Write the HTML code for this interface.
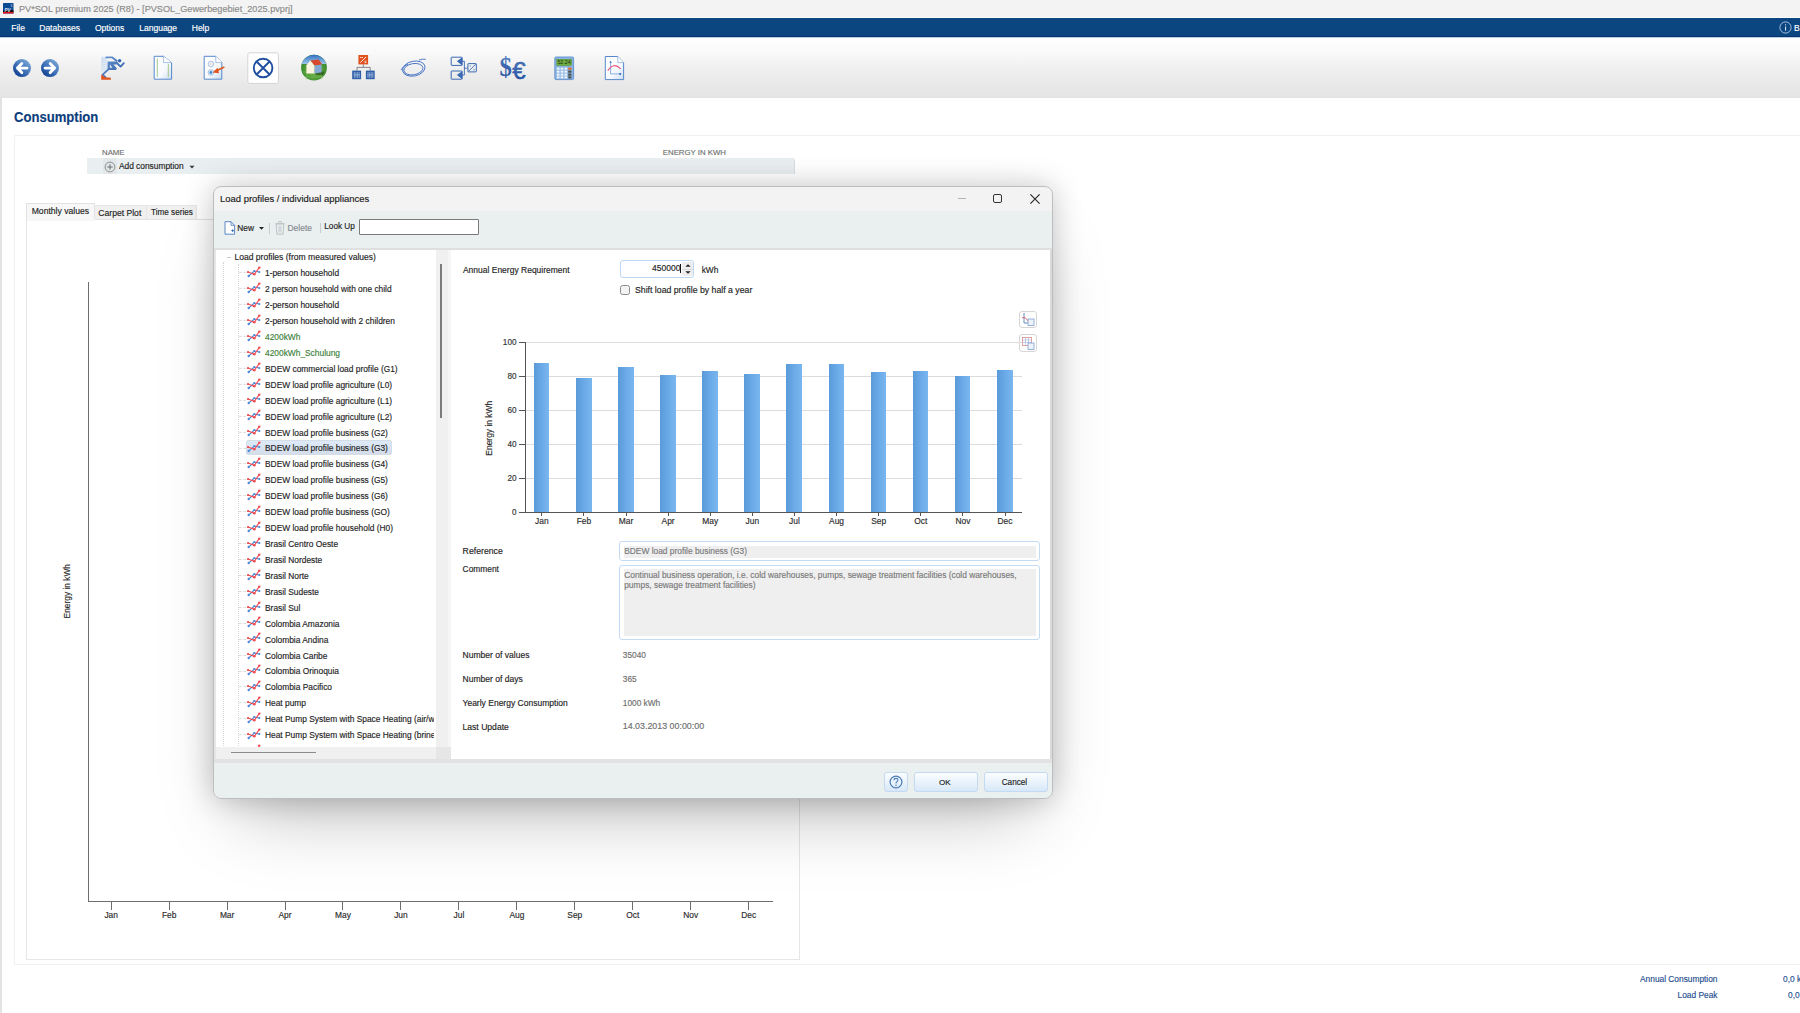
<!DOCTYPE html>
<html><head><meta charset="utf-8"><title>PV*SOL</title>
<style>
html,body{margin:0;padding:0;}
body{width:1800px;height:1013px;overflow:hidden;position:relative;background:#fff;font-family:"Liberation Sans",sans-serif;}
.t{position:absolute;white-space:pre;-webkit-text-stroke:0.15px currentColor;}
.b{position:absolute;box-sizing:border-box;}
svg{position:absolute;overflow:visible;}
</style></head><body>

<div class="b" style="left:0px;top:0px;width:1800px;height:17px;background:#f3f3f3;"></div>
<div class="b" style="left:0px;top:17px;width:1800px;height:1px;background:#fbfbfb;"></div>
<svg style="left:2.9px;top:2.9px" width="10.5" height="10.5" viewBox="0 0 10.5 10.5"><rect x="0" y="0" width="10.5" height="10.5" rx="0.6" fill="#0b4a92"/><rect x="0" y="7.3" width="10.5" height="1.8" fill="#0a0a0a"/><rect x="0" y="8.9" width="10.5" height="1.6" fill="#e5141c"/><text x="1.4" y="8.7" font-size="4.6" font-weight="700" font-style="italic" fill="#dfe8f5" font-family="Liberation Sans">PV</text><text x="7.4" y="3.8" font-size="3.4" font-weight="700" fill="#9db7dc" font-family="Liberation Sans">5</text></svg>
<div class="t " style="left:18.75px;top:4.40px;font-size:9.8px;line-height:9.8px;color:#8a8a8a;font-weight:400;transform:scaleX(0.933);transform-origin:0 0;">PV*SOL premium 2025 (R8) - [PVSOL_Gewerbegebiet_2025.pvprj]</div>
<div class="b" style="left:0px;top:18px;width:1800px;height:19px;background:#0c4681;"></div>
<div class="b" style="left:0px;top:35.6px;width:1800px;height:1.4px;background:#05346e;"></div>
<div class="b" style="left:0px;top:37px;width:1800px;height:1px;background:#b9cde3;"></div>
<div class="t " style="left:11.25px;top:23.80px;font-size:8.5px;line-height:8.5px;color:#ffffff;font-weight:400;">File</div>
<div class="t " style="left:39.25px;top:23.80px;font-size:8.5px;line-height:8.5px;color:#ffffff;font-weight:400;">Databases</div>
<div class="t " style="left:95.00px;top:23.80px;font-size:8.5px;line-height:8.5px;color:#ffffff;font-weight:400;">Options</div>
<div class="t " style="left:139.25px;top:23.80px;font-size:8.5px;line-height:8.5px;color:#ffffff;font-weight:400;">Language</div>
<div class="t " style="left:191.75px;top:23.80px;font-size:8.5px;line-height:8.5px;color:#ffffff;font-weight:400;">Help</div>
<svg style="left:1779px;top:21px" width="13" height="13" viewBox="0 0 13 13"><circle cx="6.5" cy="6.5" r="5.6" fill="none" stroke="#a9c3e3" stroke-width="1"/><rect x="6" y="5.5" width="1.1" height="4.2" fill="#cfe0f3"/><rect x="6" y="3.3" width="1.1" height="1.1" fill="#cfe0f3"/></svg>
<div class="t " style="left:1794.00px;top:23.80px;font-size:8.5px;line-height:8.5px;color:#ffffff;font-weight:400;">B</div>
<div class="b" style="left:0px;top:38px;width:1800px;height:60px;background:linear-gradient(#ffffff 0%,#f9f9f9 25%,#f0f0f0 50%,#e9e9e9 75%,#e4e4e4 100%);"></div>
<div class="b" style="left:0px;top:98px;width:2.3px;height:915px;background:#e3e3e3;"></div>
<div class="t " style="left:14.00px;top:110.25px;font-size:14px;line-height:14px;color:#0b3d7c;font-weight:700;transform:scaleX(0.935);transform-origin:0 0;">Consumption</div>
<div class="b" style="left:13.5px;top:135px;width:1800px;height:830px;border:1px solid #edf1f3;border-right:none;border-radius:2px 0 0 2px;"></div>
<div class="t " style="left:102.00px;top:148.70px;font-size:7.8px;line-height:7.8px;color:#6f6f6f;font-weight:400;">NAME</div>
<div class="t " style="left:662.80px;top:148.70px;font-size:7.8px;line-height:7.8px;color:#6f6f6f;font-weight:400;">ENERGY IN KWH</div>
<div class="b" style="left:87px;top:158px;width:708px;height:16px;background:#e9eef0;border-radius:0 4px 0 0;border-right:1px solid #d8dcde;"></div>
<div class="b" style="left:102.8px;top:158px;width:14px;height:16px;background:#e2e8ea;"></div>
<svg style="left:104px;top:161px" width="12" height="12" viewBox="0 0 12 12"><circle cx="6" cy="6" r="4.9" fill="none" stroke="#8d8d8d" stroke-width="1"/><rect x="5.5" y="3.3" width="1" height="5.4" fill="#6d6d6d"/><rect x="3.3" y="5.5" width="5.4" height="1" fill="#6d6d6d"/></svg>
<div class="t " style="left:118.90px;top:162.29px;font-size:8.4px;line-height:8.4px;color:#1e1e1e;font-weight:400;">Add consumption</div>
<svg style="left:189px;top:165px" width="6" height="4" viewBox="0 0 6 4"><path d="M0.5 0.8 L5.5 0.8 L3 3.4 Z" fill="#333"/></svg>
<div class="b" style="left:26px;top:203.3px;width:69px;height:16px;background:#f7f7f7;border:1px solid #e3e3e3;border-bottom:none;"></div>
<div class="b" style="left:95px;top:205px;width:51.5px;height:14.5px;background:#f0f0f0;border:1px solid #e6e6e6;border-bottom:none;border-left:none;"></div>
<div class="b" style="left:146.5px;top:205px;width:50.5px;height:14.5px;background:#f0f0f0;border:1px solid #e6e6e6;border-bottom:none;border-left:none;"></div>
<div class="t " style="left:31.70px;top:207.12px;font-size:8.6px;line-height:8.6px;color:#1e1e1e;font-weight:400;">Monthly values</div>
<div class="t " style="left:98.30px;top:208.62px;font-size:8.6px;line-height:8.6px;color:#1e1e1e;font-weight:400;">Carpet Plot</div>
<div class="t " style="left:151.10px;top:209.00px;font-size:8.15px;line-height:8.15px;color:#1e1e1e;font-weight:400;">Time series</div>
<div class="b" style="left:25.7px;top:219px;width:774px;height:740.5px;border:1px solid #e6e6e6;border-top:1px solid #e3e3e3;"></div>
<div class="b" style="left:26.7px;top:219px;width:68px;height:1.5px;background:#f7f7f7;"></div>
<div class="b" style="left:87.5px;top:281.5px;width:1.5px;height:620.5px;background:#6e6e6e;"></div>
<div class="b" style="left:87.5px;top:900.5px;width:685px;height:1.5px;background:#6e6e6e;"></div>
<div class="b" style="left:111px;top:901px;width:1px;height:8.5px;background:#6e6e6e;"></div>
<div class="t" style="left:71.20px;width:80px;text-align:center;top:911.09px;font-size:8.4px;line-height:8.4px;color:#2b2b2b;">Jan</div>
<div class="b" style="left:169px;top:901px;width:1px;height:8.5px;background:#6e6e6e;"></div>
<div class="t" style="left:129.15px;width:80px;text-align:center;top:911.09px;font-size:8.4px;line-height:8.4px;color:#2b2b2b;">Feb</div>
<div class="b" style="left:227px;top:901px;width:1px;height:8.5px;background:#6e6e6e;"></div>
<div class="t" style="left:187.10px;width:80px;text-align:center;top:911.09px;font-size:8.4px;line-height:8.4px;color:#2b2b2b;">Mar</div>
<div class="b" style="left:285px;top:901px;width:1px;height:8.5px;background:#6e6e6e;"></div>
<div class="t" style="left:245.05px;width:80px;text-align:center;top:911.09px;font-size:8.4px;line-height:8.4px;color:#2b2b2b;">Apr</div>
<div class="b" style="left:342px;top:901px;width:1px;height:8.5px;background:#6e6e6e;"></div>
<div class="t" style="left:303.00px;width:80px;text-align:center;top:911.09px;font-size:8.4px;line-height:8.4px;color:#2b2b2b;">May</div>
<div class="b" style="left:400px;top:901px;width:1px;height:8.5px;background:#6e6e6e;"></div>
<div class="t" style="left:360.95px;width:80px;text-align:center;top:911.09px;font-size:8.4px;line-height:8.4px;color:#2b2b2b;">Jun</div>
<div class="b" style="left:458px;top:901px;width:1px;height:8.5px;background:#6e6e6e;"></div>
<div class="t" style="left:418.90px;width:80px;text-align:center;top:911.09px;font-size:8.4px;line-height:8.4px;color:#2b2b2b;">Jul</div>
<div class="b" style="left:516px;top:901px;width:1px;height:8.5px;background:#6e6e6e;"></div>
<div class="t" style="left:476.85px;width:80px;text-align:center;top:911.09px;font-size:8.4px;line-height:8.4px;color:#2b2b2b;">Aug</div>
<div class="b" style="left:574px;top:901px;width:1px;height:8.5px;background:#6e6e6e;"></div>
<div class="t" style="left:534.80px;width:80px;text-align:center;top:911.09px;font-size:8.4px;line-height:8.4px;color:#2b2b2b;">Sep</div>
<div class="b" style="left:632px;top:901px;width:1px;height:8.5px;background:#6e6e6e;"></div>
<div class="t" style="left:592.75px;width:80px;text-align:center;top:911.09px;font-size:8.4px;line-height:8.4px;color:#2b2b2b;">Oct</div>
<div class="b" style="left:690px;top:901px;width:1px;height:8.5px;background:#6e6e6e;"></div>
<div class="t" style="left:650.70px;width:80px;text-align:center;top:911.09px;font-size:8.4px;line-height:8.4px;color:#2b2b2b;">Nov</div>
<div class="b" style="left:748px;top:901px;width:1px;height:8.5px;background:#6e6e6e;"></div>
<div class="t" style="left:708.65px;width:80px;text-align:center;top:911.09px;font-size:8.4px;line-height:8.4px;color:#2b2b2b;">Dec</div>
<div class="t" style="left:26.5px;top:587.3px;width:80px;text-align:center;font-size:8.4px;line-height:8.4px;color:#2b2b2b;transform:rotate(-90deg);">Energy in kWh</div>
<div class="t" style="left:1540px;width:177.5px;text-align:right;top:974.93px;font-size:8.35px;line-height:8.35px;color:#1f4f8f;">Annual Consumption</div>
<div class="t" style="left:1540px;width:177.5px;text-align:right;top:990.93px;font-size:8.35px;line-height:8.35px;color:#1f4f8f;">Load Peak</div>
<div class="t " style="left:1783.00px;top:974.93px;font-size:8.35px;line-height:8.35px;color:#1f4f8f;font-weight:400;">0,0 kWh</div>
<div class="t " style="left:1788.00px;top:990.93px;font-size:8.35px;line-height:8.35px;color:#1f4f8f;font-weight:400;">0,0 kW</div>
<div class="b" style="left:212.5px;top:185.9px;width:840.5px;height:613.0px;border-radius:8px;box-shadow:0 0 30px rgba(0,0,0,0.22),0 36px 70px -24px rgba(0,0,0,0.28);background:linear-gradient(#f3f3f3 0,#f3f3f3 24px,#eaf0f0 24px);border:1.3px solid #bdbdbd;"></div>
<div class="t " style="left:220.00px;top:194.47px;font-size:9.6px;line-height:9.6px;color:#1a1a1a;font-weight:400;transform:scaleX(0.985);transform-origin:0 0;">Load profiles / individual appliances</div>
<div class="b" style="left:957.6px;top:197.8px;width:8.5px;height:1px;background:#b4b4b4;"></div>
<div class="b" style="left:993.2px;top:194.2px;width:9px;height:9px;border:1.4px solid #333;border-radius:2px;"></div>
<svg style="left:1029.5px;top:193.8px" width="10" height="10" viewBox="0 0 10 10"><path d="M0.4 0.4 L9.6 9.6 M9.6 0.4 L0.4 9.6" stroke="#2a2a2a" stroke-width="1.15"/></svg>
<div class="b" style="left:213.8px;top:210.6px;width:838px;height:37.3px;background:#eaf0f0;"></div>
<div class="b" style="left:213.8px;top:247.8px;width:838px;height:2px;background:#dfdfdf;"></div>
<svg style="left:224px;top:220.5px" width="12" height="14" viewBox="0 0 12 14"><path d="M1 0.7 H7 L10.6 4.3 V13.2 H1 Z" fill="#fff" stroke="#5b87c4" stroke-width="1"/><path d="M7 0.7 V4.3 H10.6" fill="none" stroke="#5b87c4" stroke-width="0.9"/><path d="M7.2 9.6 H10 M8.6 8.2 V11" stroke="#3d6fb5" stroke-width="0.9"/></svg>
<div class="t " style="left:237.30px;top:223.73px;font-size:8.35px;line-height:8.35px;color:#1e1e1e;font-weight:400;">New</div>
<svg style="left:259px;top:226.5px" width="5" height="3" viewBox="0 0 5 3"><path d="M0 0 H5 L2.5 2.8 Z" fill="#222"/></svg>
<div class="b" style="left:269.3px;top:222.5px;width:1px;height:11px;background:#c9cdcf;"></div>
<svg style="left:274.5px;top:220.8px" width="10" height="14" viewBox="0 0 10 14"><path d="M1.2 3 H8.8 L8.2 13.2 H1.8 Z" fill="none" stroke="#b9bec2" stroke-width="0.9"/><path d="M0.3 2.6 H9.7 M3.5 2.5 V0.6 H6.5 V2.5 M4.1 4.8 V11.8 M5.9 4.8 V11.8" fill="none" stroke="#b9bec2" stroke-width="0.8"/></svg>
<div class="t " style="left:287.50px;top:223.83px;font-size:8.47px;line-height:8.47px;color:#878b90;font-weight:400;">Delete</div>
<div class="b" style="left:320.2px;top:223.2px;width:1px;height:9.5px;background:#c9cdcf;"></div>
<div class="t " style="left:324.30px;top:223.05px;font-size:8.21px;line-height:8.21px;color:#1e1e1e;font-weight:400;">Look Up</div>
<div class="b" style="left:359.1px;top:219.3px;width:120px;height:15.5px;background:#fff;border:1.2px solid #7a7a7a;border-radius:1px;"></div>
<div class="b" style="left:213.8px;top:249.8px;width:838px;height:509px;background:#e6e6e6;"></div>
<div class="b" style="left:216px;top:249.8px;width:220px;height:497px;background:#fff;"></div>
<div class="b" style="left:436px;top:249.8px;width:12px;height:497px;background:#f0f0f0;"></div>
<div class="b" style="left:448px;top:249.8px;width:3px;height:497px;background:#f6f6f6;"></div>
<div class="b" style="left:440px;top:264px;width:1.6px;height:154px;background:#7c7c7c;"></div>
<div class="b" style="left:216px;top:746.8px;width:220px;height:12px;background:#f0f0f0;"></div>
<div class="b" style="left:230.5px;top:751.5px;width:85px;height:1.6px;background:#8a8a8a;"></div>
<div class="b" style="left:451px;top:249.8px;width:599px;height:509px;background:#fff;"></div>
<div class="b" style="left:1050px;top:249.8px;width:2px;height:509px;background:#dadada;"></div>
<div class="b" style="left:213.8px;top:758.8px;width:838px;height:4.5px;background:#e2e2e2;"></div>
<svg width="0" height="0" style="position:absolute"><defs><symbol id="ic" viewBox="0 0 14 12"><polyline points="1.7,10 7.3,5 12.3,6" fill="none" stroke="#5089d6" stroke-width="1.05"/><circle cx="1.7" cy="10" r="1.2" fill="#5089d6"/><circle cx="7.3" cy="5" r="1.1" fill="#5089d6"/><circle cx="12.3" cy="6" r="1.1" fill="#5089d6"/><polyline points="1,6 7.3,8.3 12.3,1.6" fill="none" stroke="#ef4b50" stroke-width="1.05"/><circle cx="1" cy="6" r="1.1" fill="#ef4b50"/><circle cx="7.3" cy="8.3" r="1.3" fill="#ef4b50"/><circle cx="12.3" cy="1.6" r="1.2" fill="#ef4b50"/></symbol></defs></svg>
<div class="b" style="left:216px;top:249.8px;width:218px;height:497px;overflow:hidden;">
<div class="b" style="left:10.900000000000006px;top:7.199999999999989px;width:4.2px;height:1px;border-top:1px solid #cccccc;"></div>
<div class="t" style="left:18.40px;top:3.70px;font-size:8.56px;line-height:8.56px;color:#1e1e1e;">Load profiles (from measured values)</div>
<div class="b" style="left:7px;top:12.699999999999989px;width:1px;height:500px;border-left:1px dotted #d6d6d6;"></div>
<div class="b" style="left:22px;top:14.199999999999989px;width:1px;height:500px;border-left:1px dotted #d6d6d6;"></div>
<div class="b" style="left:23px;top:22.50px;width:6.5px;height:1px;border-top:1px dashed #dcdcdc;"></div>
<svg style="left:31px;top:16.20px" width="14" height="12"><use href="#ic"/></svg>
<div class="t" style="left:49.00px;top:19.41px;font-size:8.38px;line-height:8.38px;color:#1e1e1e;">1-person household</div>
<div class="b" style="left:23px;top:38.43px;width:6.5px;height:1px;border-top:1px dashed #dcdcdc;"></div>
<svg style="left:31px;top:32.13px" width="14" height="12"><use href="#ic"/></svg>
<div class="t" style="left:49.00px;top:35.34px;font-size:8.38px;line-height:8.38px;color:#1e1e1e;">2 person household with one child</div>
<div class="b" style="left:23px;top:54.36px;width:6.5px;height:1px;border-top:1px dashed #dcdcdc;"></div>
<svg style="left:31px;top:48.06px" width="14" height="12"><use href="#ic"/></svg>
<div class="t" style="left:49.00px;top:51.27px;font-size:8.38px;line-height:8.38px;color:#1e1e1e;">2-person household</div>
<div class="b" style="left:23px;top:70.29px;width:6.5px;height:1px;border-top:1px dashed #dcdcdc;"></div>
<svg style="left:31px;top:63.99px" width="14" height="12"><use href="#ic"/></svg>
<div class="t" style="left:49.00px;top:67.20px;font-size:8.38px;line-height:8.38px;color:#1e1e1e;">2-person household with 2 children</div>
<div class="b" style="left:23px;top:86.22px;width:6.5px;height:1px;border-top:1px dashed #dcdcdc;"></div>
<svg style="left:31px;top:79.92px" width="14" height="12"><use href="#ic"/></svg>
<div class="t" style="left:49.00px;top:83.13px;font-size:8.38px;line-height:8.38px;color:#3c7f3c;">4200kWh</div>
<div class="b" style="left:23px;top:102.15px;width:6.5px;height:1px;border-top:1px dashed #dcdcdc;"></div>
<svg style="left:31px;top:95.85px" width="14" height="12"><use href="#ic"/></svg>
<div class="t" style="left:49.00px;top:99.06px;font-size:8.38px;line-height:8.38px;color:#3c7f3c;">4200kWh_Schulung</div>
<div class="b" style="left:23px;top:118.08px;width:6.5px;height:1px;border-top:1px dashed #dcdcdc;"></div>
<svg style="left:31px;top:111.78px" width="14" height="12"><use href="#ic"/></svg>
<div class="t" style="left:49.00px;top:114.99px;font-size:8.38px;line-height:8.38px;color:#1e1e1e;">BDEW commercial load profile (G1)</div>
<div class="b" style="left:23px;top:134.01px;width:6.5px;height:1px;border-top:1px dashed #dcdcdc;"></div>
<svg style="left:31px;top:127.71px" width="14" height="12"><use href="#ic"/></svg>
<div class="t" style="left:49.00px;top:130.92px;font-size:8.38px;line-height:8.38px;color:#1e1e1e;">BDEW load profile agriculture (L0)</div>
<div class="b" style="left:23px;top:149.94px;width:6.5px;height:1px;border-top:1px dashed #dcdcdc;"></div>
<svg style="left:31px;top:143.64px" width="14" height="12"><use href="#ic"/></svg>
<div class="t" style="left:49.00px;top:146.85px;font-size:8.38px;line-height:8.38px;color:#1e1e1e;">BDEW load profile agriculture (L1)</div>
<div class="b" style="left:23px;top:165.87px;width:6.5px;height:1px;border-top:1px dashed #dcdcdc;"></div>
<svg style="left:31px;top:159.57px" width="14" height="12"><use href="#ic"/></svg>
<div class="t" style="left:49.00px;top:162.78px;font-size:8.38px;line-height:8.38px;color:#1e1e1e;">BDEW load profile agriculture (L2)</div>
<div class="b" style="left:23px;top:181.80px;width:6.5px;height:1px;border-top:1px dashed #dcdcdc;"></div>
<svg style="left:31px;top:175.50px" width="14" height="12"><use href="#ic"/></svg>
<div class="t" style="left:49.00px;top:178.71px;font-size:8.38px;line-height:8.38px;color:#1e1e1e;">BDEW load profile business (G2)</div>
<div class="b" style="left:30.099999999999994px;top:190.23px;width:145.5px;height:15.4px;background:linear-gradient(#deeaf8,#d4dde9);border:1px solid #d3dde8;border-radius:2px;"></div>
<div class="b" style="left:23px;top:197.73px;width:6.5px;height:1px;border-top:1px dashed #dcdcdc;"></div>
<svg style="left:31px;top:191.43px" width="14" height="12"><use href="#ic"/></svg>
<div class="t" style="left:49.00px;top:194.64px;font-size:8.38px;line-height:8.38px;color:#1e1e1e;">BDEW load profile business (G3)</div>
<div class="b" style="left:23px;top:213.66px;width:6.5px;height:1px;border-top:1px dashed #dcdcdc;"></div>
<svg style="left:31px;top:207.36px" width="14" height="12"><use href="#ic"/></svg>
<div class="t" style="left:49.00px;top:210.57px;font-size:8.38px;line-height:8.38px;color:#1e1e1e;">BDEW load profile business (G4)</div>
<div class="b" style="left:23px;top:229.59px;width:6.5px;height:1px;border-top:1px dashed #dcdcdc;"></div>
<svg style="left:31px;top:223.29px" width="14" height="12"><use href="#ic"/></svg>
<div class="t" style="left:49.00px;top:226.50px;font-size:8.38px;line-height:8.38px;color:#1e1e1e;">BDEW load profile business (G5)</div>
<div class="b" style="left:23px;top:245.52px;width:6.5px;height:1px;border-top:1px dashed #dcdcdc;"></div>
<svg style="left:31px;top:239.22px" width="14" height="12"><use href="#ic"/></svg>
<div class="t" style="left:49.00px;top:242.43px;font-size:8.38px;line-height:8.38px;color:#1e1e1e;">BDEW load profile business (G6)</div>
<div class="b" style="left:23px;top:261.45px;width:6.5px;height:1px;border-top:1px dashed #dcdcdc;"></div>
<svg style="left:31px;top:255.15px" width="14" height="12"><use href="#ic"/></svg>
<div class="t" style="left:49.00px;top:258.36px;font-size:8.38px;line-height:8.38px;color:#1e1e1e;">BDEW load profile business (GO)</div>
<div class="b" style="left:23px;top:277.38px;width:6.5px;height:1px;border-top:1px dashed #dcdcdc;"></div>
<svg style="left:31px;top:271.08px" width="14" height="12"><use href="#ic"/></svg>
<div class="t" style="left:49.00px;top:274.29px;font-size:8.38px;line-height:8.38px;color:#1e1e1e;">BDEW load profile household (H0)</div>
<div class="b" style="left:23px;top:293.31px;width:6.5px;height:1px;border-top:1px dashed #dcdcdc;"></div>
<svg style="left:31px;top:287.01px" width="14" height="12"><use href="#ic"/></svg>
<div class="t" style="left:49.00px;top:290.22px;font-size:8.38px;line-height:8.38px;color:#1e1e1e;">Brasil Centro Oeste</div>
<div class="b" style="left:23px;top:309.24px;width:6.5px;height:1px;border-top:1px dashed #dcdcdc;"></div>
<svg style="left:31px;top:302.94px" width="14" height="12"><use href="#ic"/></svg>
<div class="t" style="left:49.00px;top:306.15px;font-size:8.38px;line-height:8.38px;color:#1e1e1e;">Brasil Nordeste</div>
<div class="b" style="left:23px;top:325.17px;width:6.5px;height:1px;border-top:1px dashed #dcdcdc;"></div>
<svg style="left:31px;top:318.87px" width="14" height="12"><use href="#ic"/></svg>
<div class="t" style="left:49.00px;top:322.08px;font-size:8.38px;line-height:8.38px;color:#1e1e1e;">Brasil Norte</div>
<div class="b" style="left:23px;top:341.10px;width:6.5px;height:1px;border-top:1px dashed #dcdcdc;"></div>
<svg style="left:31px;top:334.80px" width="14" height="12"><use href="#ic"/></svg>
<div class="t" style="left:49.00px;top:338.01px;font-size:8.38px;line-height:8.38px;color:#1e1e1e;">Brasil Sudeste</div>
<div class="b" style="left:23px;top:357.03px;width:6.5px;height:1px;border-top:1px dashed #dcdcdc;"></div>
<svg style="left:31px;top:350.73px" width="14" height="12"><use href="#ic"/></svg>
<div class="t" style="left:49.00px;top:353.94px;font-size:8.38px;line-height:8.38px;color:#1e1e1e;">Brasil Sul</div>
<div class="b" style="left:23px;top:372.96px;width:6.5px;height:1px;border-top:1px dashed #dcdcdc;"></div>
<svg style="left:31px;top:366.66px" width="14" height="12"><use href="#ic"/></svg>
<div class="t" style="left:49.00px;top:369.87px;font-size:8.38px;line-height:8.38px;color:#1e1e1e;">Colombia Amazonia</div>
<div class="b" style="left:23px;top:388.89px;width:6.5px;height:1px;border-top:1px dashed #dcdcdc;"></div>
<svg style="left:31px;top:382.59px" width="14" height="12"><use href="#ic"/></svg>
<div class="t" style="left:49.00px;top:385.80px;font-size:8.38px;line-height:8.38px;color:#1e1e1e;">Colombia Andina</div>
<div class="b" style="left:23px;top:404.82px;width:6.5px;height:1px;border-top:1px dashed #dcdcdc;"></div>
<svg style="left:31px;top:398.52px" width="14" height="12"><use href="#ic"/></svg>
<div class="t" style="left:49.00px;top:401.73px;font-size:8.38px;line-height:8.38px;color:#1e1e1e;">Colombia Caribe</div>
<div class="b" style="left:23px;top:420.75px;width:6.5px;height:1px;border-top:1px dashed #dcdcdc;"></div>
<svg style="left:31px;top:414.45px" width="14" height="12"><use href="#ic"/></svg>
<div class="t" style="left:49.00px;top:417.66px;font-size:8.38px;line-height:8.38px;color:#1e1e1e;">Colombia Orinoquia</div>
<div class="b" style="left:23px;top:436.68px;width:6.5px;height:1px;border-top:1px dashed #dcdcdc;"></div>
<svg style="left:31px;top:430.38px" width="14" height="12"><use href="#ic"/></svg>
<div class="t" style="left:49.00px;top:433.59px;font-size:8.38px;line-height:8.38px;color:#1e1e1e;">Colombia Pacifico</div>
<div class="b" style="left:23px;top:452.61px;width:6.5px;height:1px;border-top:1px dashed #dcdcdc;"></div>
<svg style="left:31px;top:446.31px" width="14" height="12"><use href="#ic"/></svg>
<div class="t" style="left:49.00px;top:449.52px;font-size:8.38px;line-height:8.38px;color:#1e1e1e;">Heat pump</div>
<div class="b" style="left:23px;top:468.54px;width:6.5px;height:1px;border-top:1px dashed #dcdcdc;"></div>
<svg style="left:31px;top:462.24px" width="14" height="12"><use href="#ic"/></svg>
<div class="t" style="left:49.00px;top:465.45px;font-size:8.38px;line-height:8.38px;color:#1e1e1e;">Heat Pump System with Space Heating (air/water)</div>
<div class="b" style="left:23px;top:484.47px;width:6.5px;height:1px;border-top:1px dashed #dcdcdc;"></div>
<svg style="left:31px;top:478.17px" width="14" height="12"><use href="#ic"/></svg>
<div class="t" style="left:49.00px;top:481.38px;font-size:8.38px;line-height:8.38px;color:#1e1e1e;">Heat Pump System with Space Heating (brine/water)</div>
<div class="b" style="left:23px;top:500.40px;width:6.5px;height:1px;border-top:1px dashed #dcdcdc;"></div>
<svg style="left:31px;top:494.10px" width="14" height="12"><use href="#ic"/></svg>
<div class="t" style="left:49.00px;top:497.31px;font-size:8.38px;line-height:8.38px;color:#1e1e1e;">Heat Pump System</div>
</div>
<div class="t " style="left:462.90px;top:266.10px;font-size:8.5px;line-height:8.5px;color:#1e1e1e;font-weight:400;">Annual Energy Requirement</div>
<div class="b" style="left:620.3px;top:260.3px;width:74px;height:17.4px;background:#fff;border:1px solid #bcd7f3;border-radius:3px;"></div>
<div class="t " style="left:652.00px;top:263.80px;font-size:8.5px;line-height:8.5px;color:#1e1e1e;font-weight:400;">450000</div>
<div class="b" style="left:679.8px;top:263.5px;width:0.9px;height:9.5px;background:#111;"></div>
<div class="b" style="left:682.3px;top:262px;width:10.7px;height:14.3px;background:#eeeeee;border-radius:1px;"></div>
<div class="b" style="left:682.3px;top:268.8px;width:10.7px;height:1px;background:#dadada;"></div>
<svg style="left:684.5px;top:264.2px" width="6" height="3" viewBox="0 0 6 3"><path d="M0.3 2.8 H5.7 L3 0.2 Z" fill="#222"/></svg>
<svg style="left:684.5px;top:271.3px" width="6" height="3" viewBox="0 0 6 3"><path d="M0.3 0.2 H5.7 L3 2.8 Z" fill="#222"/></svg>
<div class="t " style="left:701.70px;top:265.97px;font-size:8.3px;line-height:8.3px;color:#1e1e1e;font-weight:400;">kWh</div>
<div class="b" style="left:620.3px;top:285.3px;width:10px;height:10px;background:#f3f3f3;border:1.1px solid #8a8a8a;border-radius:2.5px;"></div>
<div class="t " style="left:635.00px;top:286.32px;font-size:8.72px;line-height:8.72px;color:#1e1e1e;font-weight:400;">Shift load profile by half a year</div>
<div class="b" style="left:1019.4px;top:310.7px;width:17.8px;height:17.8px;background:#fff;border:1px solid #d6d6d6;border-radius:3px;"></div>
<div class="b" style="left:1019.4px;top:334.4px;width:17.8px;height:17.8px;background:#fff;border:1px solid #d6d6d6;border-radius:3px;"></div>
<svg style="left:1021px;top:312px" width="15" height="15" viewBox="0 0 15 15"><path d="M3 1 V11 H13" fill="none" stroke="#3f6fb8" stroke-width="0.8"/><path d="M1 6 Q4 4 7 9" fill="none" stroke="#e04848" stroke-width="0.8"/><rect x="7" y="7" width="6" height="6.5" fill="#eef3fa" stroke="#6d93c8" stroke-width="0.7"/></svg>
<svg style="left:1021px;top:336px" width="15" height="15" viewBox="0 0 15 15"><rect x="1.5" y="1.5" width="9" height="8" fill="#fff" stroke="#d87a7a" stroke-width="0.7"/><path d="M1.5 4 H10.5 M1.5 6.5 H10.5 M4.5 1.5 V9.5 M7.5 1.5 V9.5" stroke="#9bb3d8" stroke-width="0.6"/><rect x="7" y="7" width="6" height="6.5" fill="#eef3fa" stroke="#6d93c8" stroke-width="0.7"/></svg>
<div class="b" style="left:519px;top:512px;width:6.5px;height:1px;background:#555;"></div>
<div class="t" style="left:436.5px;width:80px;text-align:right;top:509.46px;font-size:8.2px;line-height:8.2px;color:#333;">0</div>
<div class="b" style="left:526px;top:478px;width:496px;height:1px;background:#dcdcdc;"></div>
<div class="b" style="left:519px;top:478px;width:6.5px;height:1px;background:#555;"></div>
<div class="t" style="left:436.5px;width:80px;text-align:right;top:475.40px;font-size:8.2px;line-height:8.2px;color:#333;">20</div>
<div class="b" style="left:526px;top:444px;width:496px;height:1px;background:#dcdcdc;"></div>
<div class="b" style="left:519px;top:444px;width:6.5px;height:1px;background:#555;"></div>
<div class="t" style="left:436.5px;width:80px;text-align:right;top:441.34px;font-size:8.2px;line-height:8.2px;color:#333;">40</div>
<div class="b" style="left:526px;top:410px;width:496px;height:1px;background:#dcdcdc;"></div>
<div class="b" style="left:519px;top:410px;width:6.5px;height:1px;background:#555;"></div>
<div class="t" style="left:436.5px;width:80px;text-align:right;top:407.28px;font-size:8.2px;line-height:8.2px;color:#333;">60</div>
<div class="b" style="left:526px;top:376px;width:496px;height:1px;background:#dcdcdc;"></div>
<div class="b" style="left:519px;top:376px;width:6.5px;height:1px;background:#555;"></div>
<div class="t" style="left:436.5px;width:80px;text-align:right;top:373.22px;font-size:8.2px;line-height:8.2px;color:#333;">80</div>
<div class="b" style="left:526px;top:342px;width:496px;height:1px;background:#dcdcdc;"></div>
<div class="b" style="left:519px;top:342px;width:6.5px;height:1px;background:#555;"></div>
<div class="t" style="left:436.5px;width:80px;text-align:right;top:339.16px;font-size:8.2px;line-height:8.2px;color:#333;">100</div>
<div class="b" style="left:533.8px;top:363.05px;width:15.6px;height:148.95px;background:linear-gradient(90deg,#5a9ad8 0%,#69a8e6 45%,#7ab7f0 100%);"></div>
<div class="b" style="left:575.91px;top:378.37px;width:15.6px;height:133.63px;background:linear-gradient(90deg,#5a9ad8 0%,#69a8e6 45%,#7ab7f0 100%);"></div>
<div class="b" style="left:618.02px;top:367.3px;width:15.6px;height:144.7px;background:linear-gradient(90deg,#5a9ad8 0%,#69a8e6 45%,#7ab7f0 100%);"></div>
<div class="b" style="left:660.13px;top:375.48px;width:15.6px;height:136.52px;background:linear-gradient(90deg,#5a9ad8 0%,#69a8e6 45%,#7ab7f0 100%);"></div>
<div class="b" style="left:702.24px;top:370.71px;width:15.6px;height:141.29px;background:linear-gradient(90deg,#5a9ad8 0%,#69a8e6 45%,#7ab7f0 100%);"></div>
<div class="b" style="left:744.35px;top:374.46px;width:15.6px;height:137.54px;background:linear-gradient(90deg,#5a9ad8 0%,#69a8e6 45%,#7ab7f0 100%);"></div>
<div class="b" style="left:786.46px;top:364.24px;width:15.6px;height:147.76px;background:linear-gradient(90deg,#5a9ad8 0%,#69a8e6 45%,#7ab7f0 100%);"></div>
<div class="b" style="left:828.57px;top:364.24px;width:15.6px;height:147.76px;background:linear-gradient(90deg,#5a9ad8 0%,#69a8e6 45%,#7ab7f0 100%);"></div>
<div class="b" style="left:870.68px;top:372.24px;width:15.6px;height:139.76px;background:linear-gradient(90deg,#5a9ad8 0%,#69a8e6 45%,#7ab7f0 100%);"></div>
<div class="b" style="left:912.79px;top:370.71px;width:15.6px;height:141.29px;background:linear-gradient(90deg,#5a9ad8 0%,#69a8e6 45%,#7ab7f0 100%);"></div>
<div class="b" style="left:954.9px;top:375.99px;width:15.6px;height:136.01px;background:linear-gradient(90deg,#5a9ad8 0%,#69a8e6 45%,#7ab7f0 100%);"></div>
<div class="b" style="left:997.01px;top:369.69px;width:15.6px;height:142.31px;background:linear-gradient(90deg,#5a9ad8 0%,#69a8e6 45%,#7ab7f0 100%);"></div>
<div class="b" style="left:525px;top:342px;width:1.2px;height:171px;background:#555;"></div>
<div class="b" style="left:519px;top:512px;width:503px;height:1.2px;background:#555;"></div>
<div class="b" style="left:541px;top:512px;width:1px;height:4px;background:#555;"></div>
<div class="t" style="left:501.80px;width:80px;text-align:center;top:517.19px;font-size:8.4px;line-height:8.4px;color:#2b2b2b;">Jan</div>
<div class="b" style="left:583px;top:512px;width:1px;height:4px;background:#555;"></div>
<div class="t" style="left:543.91px;width:80px;text-align:center;top:517.19px;font-size:8.4px;line-height:8.4px;color:#2b2b2b;">Feb</div>
<div class="b" style="left:626px;top:512px;width:1px;height:4px;background:#555;"></div>
<div class="t" style="left:586.02px;width:80px;text-align:center;top:517.19px;font-size:8.4px;line-height:8.4px;color:#2b2b2b;">Mar</div>
<div class="b" style="left:668px;top:512px;width:1px;height:4px;background:#555;"></div>
<div class="t" style="left:628.13px;width:80px;text-align:center;top:517.19px;font-size:8.4px;line-height:8.4px;color:#2b2b2b;">Apr</div>
<div class="b" style="left:710px;top:512px;width:1px;height:4px;background:#555;"></div>
<div class="t" style="left:670.24px;width:80px;text-align:center;top:517.19px;font-size:8.4px;line-height:8.4px;color:#2b2b2b;">May</div>
<div class="b" style="left:752px;top:512px;width:1px;height:4px;background:#555;"></div>
<div class="t" style="left:712.35px;width:80px;text-align:center;top:517.19px;font-size:8.4px;line-height:8.4px;color:#2b2b2b;">Jun</div>
<div class="b" style="left:794px;top:512px;width:1px;height:4px;background:#555;"></div>
<div class="t" style="left:754.46px;width:80px;text-align:center;top:517.19px;font-size:8.4px;line-height:8.4px;color:#2b2b2b;">Jul</div>
<div class="b" style="left:836px;top:512px;width:1px;height:4px;background:#555;"></div>
<div class="t" style="left:796.57px;width:80px;text-align:center;top:517.19px;font-size:8.4px;line-height:8.4px;color:#2b2b2b;">Aug</div>
<div class="b" style="left:878px;top:512px;width:1px;height:4px;background:#555;"></div>
<div class="t" style="left:838.68px;width:80px;text-align:center;top:517.19px;font-size:8.4px;line-height:8.4px;color:#2b2b2b;">Sep</div>
<div class="b" style="left:920px;top:512px;width:1px;height:4px;background:#555;"></div>
<div class="t" style="left:880.79px;width:80px;text-align:center;top:517.19px;font-size:8.4px;line-height:8.4px;color:#2b2b2b;">Oct</div>
<div class="b" style="left:962px;top:512px;width:1px;height:4px;background:#555;"></div>
<div class="t" style="left:922.90px;width:80px;text-align:center;top:517.19px;font-size:8.4px;line-height:8.4px;color:#2b2b2b;">Nov</div>
<div class="b" style="left:1005px;top:512px;width:1px;height:4px;background:#555;"></div>
<div class="t" style="left:965.01px;width:80px;text-align:center;top:517.19px;font-size:8.4px;line-height:8.4px;color:#2b2b2b;">Dec</div>
<div class="t" style="left:448.9px;top:423.5px;width:80px;text-align:center;font-size:8.45px;line-height:8.45px;color:#2b2b2b;transform:rotate(-90deg);">Energy in kWh</div>
<div class="t " style="left:462.60px;top:547.03px;font-size:8.71px;line-height:8.71px;color:#1e1e1e;font-weight:400;">Reference</div>
<div class="t " style="left:462.60px;top:564.59px;font-size:8.4px;line-height:8.4px;color:#1e1e1e;font-weight:400;">Comment</div>
<div class="b" style="left:619.2px;top:540.9px;width:421.3px;height:20.5px;background:#fff;border:1px solid #c4dbf3;border-radius:3px;"></div>
<div class="b" style="left:623.9px;top:545.5px;width:412px;height:12px;background:#efefef;"></div>
<div class="t " style="left:624.20px;top:546.79px;font-size:8.4px;line-height:8.4px;color:#7a7a7a;font-weight:400;">BDEW load profile business (G3)</div>
<div class="b" style="left:619.2px;top:564.7px;width:421.3px;height:75.7px;background:#fff;border:1px solid #c4dbf3;border-radius:3px;"></div>
<div class="b" style="left:623.9px;top:569.3px;width:412px;height:67px;background:#efefef;"></div>
<div class="t " style="left:624.20px;top:570.70px;font-size:8.39px;line-height:8.39px;color:#7a7a7a;font-weight:400;">Continual business operation, i.e. cold warehouses, pumps, sewage treatment facilities (cold warehouses,</div>
<div class="t " style="left:624.20px;top:581.20px;font-size:8.39px;line-height:8.39px;color:#7a7a7a;font-weight:400;">pumps, sewage treatment facilities)</div>
<div class="t " style="left:462.50px;top:650.75px;font-size:8.56px;line-height:8.56px;color:#1e1e1e;font-weight:400;">Number of values</div>
<div class="t " style="left:622.80px;top:650.97px;font-size:8.3px;line-height:8.3px;color:#6e6e6e;font-weight:400;">35040</div>
<div class="t " style="left:462.50px;top:674.65px;font-size:8.56px;line-height:8.56px;color:#1e1e1e;font-weight:400;">Number of days</div>
<div class="t " style="left:622.80px;top:674.87px;font-size:8.3px;line-height:8.3px;color:#6e6e6e;font-weight:400;">365</div>
<div class="t " style="left:462.50px;top:698.68px;font-size:8.53px;line-height:8.53px;color:#1e1e1e;font-weight:400;">Yearly Energy Consumption</div>
<div class="t " style="left:622.80px;top:698.87px;font-size:8.3px;line-height:8.3px;color:#6e6e6e;font-weight:400;">1000 kWh</div>
<div class="t " style="left:462.50px;top:722.72px;font-size:8.6px;line-height:8.6px;color:#1e1e1e;font-weight:400;">Last Update</div>
<div class="t " style="left:622.80px;top:722.49px;font-size:8.87px;line-height:8.87px;color:#6e6e6e;font-weight:400;">14.03.2013 00:00:00</div>
<div class="b" style="left:883.9px;top:771.7px;width:23.899999999999977px;height:20px;background:linear-gradient(#fbfdff 0%,#eaf3fc 50%,#d8e8f8 100%);border:1px solid #c3daf2;border-radius:3px;"></div>
<svg style="left:888.5px;top:774.5px" width="14" height="14" viewBox="0 0 14 14"><circle cx="7" cy="7" r="5.9" fill="none" stroke="#4a7cb8" stroke-width="1.2"/><path d="M5 5.3 Q5 3.4 7 3.4 Q9 3.4 9 5.1 Q9 6.2 7.6 6.9 Q7 7.3 7 8.4" fill="none" stroke="#4a7cb8" stroke-width="1.1"/><circle cx="7" cy="10.2" r="0.75" fill="#4a7cb8"/></svg>
<div class="b" style="left:914.2px;top:771.7px;width:63.59999999999991px;height:20px;background:linear-gradient(#fbfdff 0%,#eaf3fc 50%,#d8e8f8 100%);border:1px solid #c3daf2;border-radius:3px;"></div>
<div class="t " style="left:938.90px;top:778.74px;font-size:8.1px;line-height:8.1px;color:#1e1e1e;font-weight:400;">OK</div>
<div class="b" style="left:984.2px;top:771.7px;width:63.59999999999991px;height:20px;background:linear-gradient(#fbfdff 0%,#eaf3fc 50%,#d8e8f8 100%);border:1px solid #c3daf2;border-radius:3px;"></div>
<div class="t " style="left:1001.70px;top:778.67px;font-size:8.19px;line-height:8.19px;color:#1e1e1e;font-weight:400;">Cancel</div>
<svg style="left:0;top:0" width="700" height="100" viewBox="0 0 700 100">
<defs>
<linearGradient id="gb" x1="0.85" y1="0.1" x2="0.15" y2="0.95"><stop offset="0" stop-color="#78a6d6"/><stop offset="0.55" stop-color="#3b6db6"/><stop offset="1" stop-color="#0c3a8a"/></linearGradient>
<linearGradient id="gdoc" x1="0" y1="0" x2="1" y2="1"><stop offset="0" stop-color="#ffffff"/><stop offset="0.6" stop-color="#f6f9fd"/><stop offset="1" stop-color="#c9dcf0"/></linearGradient>
<radialGradient id="gglobe" cx="0.5" cy="0.6" r="0.6"><stop offset="0" stop-color="#7cc04e"/><stop offset="0.8" stop-color="#3f8d30"/><stop offset="1" stop-color="#2f7326"/></radialGradient>
<linearGradient id="gsky" x1="0" y1="0" x2="0" y2="1"><stop offset="0" stop-color="#2f6fc0"/><stop offset="1" stop-color="#9cc7ea"/></linearGradient>
</defs>
<!-- back -->
<circle cx="22" cy="68.1" r="9" fill="url(#gb)"/>
<path d="M27 68.1 H18.6 M21.8 63.6 L17.4 68.1 L21.8 72.6" fill="none" stroke="#fff" stroke-width="2.9" stroke-linecap="round" stroke-linejoin="round"/>
<!-- forward -->
<circle cx="50" cy="68.1" r="9" fill="url(#gb)"/>
<path d="M45 68.1 H53.4 M50.2 63.6 L54.6 68.1 L50.2 72.6" fill="none" stroke="#fff" stroke-width="2.9" stroke-linecap="round" stroke-linejoin="round"/>
<!-- runner -->
<linearGradient id="grun" gradientUnits="userSpaceOnUse" x1="102" y1="57" x2="122" y2="78"><stop offset="0" stop-color="#6b97cf"/><stop offset="1" stop-color="#2c5eaa"/></linearGradient>
<linearGradient id="gspd" x1="0" y1="0" x2="1" y2="1"><stop offset="0" stop-color="#d3e1f1"/><stop offset="1" stop-color="#eef3f9"/></linearGradient>
<rect x="101.3" y="56.8" width="6.2" height="14.8" fill="url(#gspd)"/>
<path d="M101.3 58.6 H107.5 M101.3 60.6 H107.5 M101.3 62.6 H107.5 M101.3 64.6 H107.5 M101.3 66.6 H107.5 M101.3 68.6 H107.5 M101.3 70.6 H107.5" stroke="#c2d4ea" stroke-width="0.5"/>
<g fill="none" stroke="url(#grun)" stroke-width="1.9" stroke-linecap="round" stroke-linejoin="round">
<path d="M106.3 57.4 H112.3 L116.6 60.8"/>
<path d="M115.6 68.6 L111.6 63.6"/>
<path d="M116.8 63 L120.6 66.6 L123.8 63.2"/>
<path d="M108.4 69.4 L102.6 74.6 L105.6 77.4"/>
</g>
<circle cx="119.6" cy="60.8" r="1.8" fill="#3a6ab4"/>
<path d="M107.6 61.6 H117 L118.2 63.4 L116.4 64.4 H112.8 L116.6 68.2 L116 69.9 H107.6 Z M109.9 64.6 L112.4 67.7 H109.9 Z" fill="url(#grun)" fill-rule="evenodd"/>
<path d="M101.2 74.4 L105.4 77.4 L110.6 77.6 L111 79.8 L101.2 79.8 Z" fill="#e2541b"/>
<!-- doc -->
<path d="M154.2 56.3 H163.6 L171.6 62.6 V79.2 H154.2 Z" fill="url(#gdoc)" stroke="#5788cc" stroke-width="1"/>
<path d="M163.6 56.3 V62.6 H171.6" fill="#fff" stroke="#8fb2de" stroke-width="0.8"/>
<path d="M157.3 58.5 V77 M168.3 64 V77" stroke="#9cc27a" stroke-width="0.9"/>
<!-- doc with pointer -->
<path d="M204.2 56.3 H215.8 L221.8 62.6 V79.2 H204.2 Z" fill="url(#gdoc)" stroke="#5788cc" stroke-width="1"/>
<path d="M215.8 56.3 V62.6 H221.8" fill="#fff" stroke="#8fb2de" stroke-width="0.8"/>
<circle cx="210.9" cy="64" r="2.8" fill="#eef3fa" stroke="#9db9de" stroke-width="0.8"/>
<circle cx="210.9" cy="64" r="1.1" fill="#f0d9c9"/>
<circle cx="210.9" cy="72.5" r="2.8" fill="#dbe7f5" stroke="#9db9de" stroke-width="0.8"/>
<circle cx="210.9" cy="72.5" r="1.4" fill="#3a8fd0"/>
<path d="M224.4 67 L214.8 71.4" stroke="#e2541b" stroke-width="1.6"/>
<path d="M212.6 72.6 L217.6 67.8 L219 73.2 Z" fill="#e2541b"/>
<!-- selected button -->
<rect x="247.8" y="52.8" width="30.6" height="30.6" rx="2" fill="#fff" stroke="#d4d4d4" stroke-width="1"/>
<circle cx="263.1" cy="68" r="9.3" fill="none" stroke="#1f4e9e" stroke-width="1.9"/>
<path d="M256.6 61.5 L269.6 74.5 M269.6 61.5 L256.6 74.5" stroke="#1f4e9e" stroke-width="1.9"/>
<!-- globe -->
<circle cx="314" cy="67.7" r="12.9" fill="url(#gglobe)"/>
<path d="M301.6 64 A12.9 12.9 0 0 1 326.4 64 Z" fill="url(#gsky)"/>
<path d="M303 72 L325 72 M305 77 L323 77 M310 60 L306 80 M318 60 L322 80" stroke="#9fd07a" stroke-width="0.5" opacity="0.7"/>
<path d="M314 71 L325 71.5 L323 75 L316 75 Z" fill="#1d3a16" opacity="0.55"/>
<path d="M306.4 65.2 L310.4 60.6 L314.6 65.4 V73.6 H306.4 Z" fill="#fbf4de"/>
<path d="M310.4 60.6 L318.6 59.6 L322.4 64.4 L314.6 65.4 Z" fill="#d8492e"/>
<path d="M314.6 65.4 L321.6 64.6 V72.2 L314.6 73.6 Z" fill="#86a8d4"/>
<!-- hierarchy -->
<rect x="358.4" y="55" width="9.7" height="9.4" fill="#e0511d"/>
<path d="M360.3 62.6 L366.2 56.8" stroke="#fff" stroke-width="0.9"/>
<path d="M360 57.5 h1.6 M362 57.5 h1 M364.5 61.2 h1.8 M364.5 62.6 h1.8" stroke="#fff" stroke-width="0.8"/>
<path d="M363.3 64.4 V67.4 M357 70.6 V67.4 H370.2 V70.6" fill="none" stroke="#7a7a7a" stroke-width="0.9"/>
<rect x="352.2" y="70.6" width="8.9" height="8.6" fill="#2f5ea8"/>
<rect x="365.9" y="70.6" width="8.8" height="8.6" fill="#2f5ea8"/>
<path d="M353.6 74.9 H359.8 M367.2 74.9 H373.4 M354.4 72 V78 M356 72 V78 M357.6 72 V78 M359.2 72 V78 M368 72 V78 M369.6 72 V78 M371.2 72 V78 M372.8 72 V78" stroke="#b9cdea" stroke-width="0.6"/>
<!-- loop -->
<g fill="none" stroke="#4470c2" stroke-width="0.9">
<ellipse cx="413.8" cy="68.6" rx="11.4" ry="7.4" transform="rotate(-12 413.8 68.6)"/>
<ellipse cx="413.4" cy="69.2" rx="9.6" ry="5.6" transform="rotate(-10 413.4 69.2)"/>
<path d="M401 70 Q403 66 408 64" />
<path d="M419 60 Q423 58.6 425.8 59.4" />
</g>
<!-- switch -->
<g fill="none" stroke="#3b69b2" stroke-width="1">
<rect x="451.2" y="57.2" width="10.8" height="8.2" rx="0.4"/>
<rect x="451.2" y="71" width="10.8" height="8.2" rx="0.4"/>
<path d="M462 61.3 H464.4 V75 H462 M464.4 68.2 H467.6" stroke-width="0.9"/>
<rect x="467.9" y="63.6" width="8.4" height="8.3" rx="0.4"/>
<path d="M468.4 71.4 L475.8 64.1" stroke-width="0.9"/>
</g>
<path d="M462.4 57.2 V65.4 L456.8 61.3 Z M462.4 71 V79.2 L456.8 75 Z" fill="#3b69b2"/>
<path d="M469.4 65.4 h1.6 M469.4 66.4 h1.6 M473 70 h2 M473 69.2 h2" stroke="#6f93c8" stroke-width="0.5"/>
<!-- calculator -->
<rect x="554.8" y="57" width="18.8" height="22.6" rx="1.2" fill="#8ab3e2" stroke="#5f91cf" stroke-width="0.9"/>
<rect x="556.8" y="59.2" width="14.8" height="6.4" fill="#6fae3e" stroke="#4f8a2e" stroke-width="0.4"/>
<text x="557.4" y="64.3" font-size="4.6" font-family="Liberation Sans" fill="#1f2e14" textLength="13.4" lengthAdjust="spacingAndGlyphs">52.24</text>
<g fill="#eef3f9"><rect x="556.8" y="67.6" width="2.8" height="2.1"/><rect x="560.6" y="67.6" width="2.8" height="2.1"/><rect x="564.4" y="67.6" width="2.8" height="2.1"/>
<rect x="556.8" y="70.6" width="2.8" height="2.1"/><rect x="560.6" y="70.6" width="2.8" height="2.1"/><rect x="564.4" y="70.6" width="2.8" height="2.1"/>
<rect x="556.8" y="73.6" width="2.8" height="2.1"/><rect x="560.6" y="73.6" width="2.8" height="2.1"/><rect x="564.4" y="73.6" width="2.8" height="2.1"/>
<rect x="556.8" y="76.4" width="2.8" height="2"/><rect x="560.6" y="76.4" width="2.8" height="2"/><rect x="564.4" y="76.4" width="2.8" height="2"/></g>
<rect x="568.2" y="67.6" width="3.2" height="2.1" fill="#e8651f"/>
<rect x="568.2" y="70.6" width="3.2" height="2.1" fill="#4a4f48"/><rect x="568.2" y="73.6" width="3.2" height="2.1" fill="#4a4f48"/><rect x="568.2" y="76.4" width="3.2" height="2" fill="#4a4f48"/>
<!-- doc chart -->
<path d="M605.3 56.5 H617.8 L623.6 62.6 V79.6 H605.3 Z" fill="url(#gdoc)" stroke="#5788cc" stroke-width="1"/>
<path d="M617.8 56.5 V62.6 H623.6" fill="#fff" stroke="#8fb2de" stroke-width="0.8"/>
<path d="M610.6 62.6 V73.9 H620" fill="none" stroke="#7ea6d8" stroke-width="0.9"/><path d="M609.4 62.8 L610.6 60.8 L611.8 62.8 Z" fill="#2f62b4"/>
<circle cx="620.2" cy="73.9" r="1" fill="#2f62b4"/>
<path d="M607.8 70.6 Q613.8 61.6 620.6 68.9" fill="none" stroke="#e8567a" stroke-width="1.1"/>
</svg>
<svg style="left:0;top:0" width="700" height="100" viewBox="0 0 700 100"><defs><linearGradient id="gde" x1="0" y1="0" x2="0" y2="1"><stop offset="0" stop-color="#5580c2"/><stop offset="1" stop-color="#1e4b9c"/></linearGradient></defs><text x="499.6" y="76.4" font-family="Liberation Serif" font-weight="700" font-size="27.5" fill="url(#gde)" transform="translate(499.6 0) scale(0.9 1) translate(-499.6 0)">$</text><text x="512.2" y="78.7" font-family="Liberation Sans" font-weight="400" font-size="24" fill="url(#gde)" stroke="#2a57a3" stroke-width="0.5">€</text></svg>
</body></html>
